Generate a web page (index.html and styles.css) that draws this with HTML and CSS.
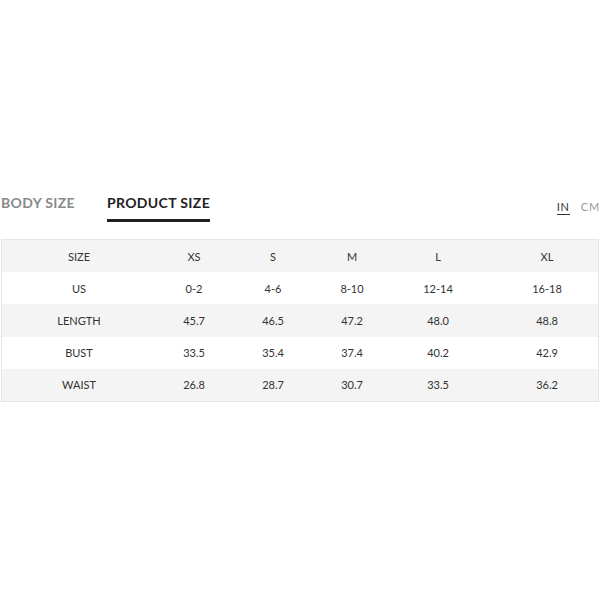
FILE: index.html
```html
<!DOCTYPE html>
<html>
<head>
<meta charset="utf-8">
<link rel="stylesheet" href="styles.css">
</head>
<body>
<div class="wrap">
  <div class="top">
    <div class="tabs">
      <div class="tab">BODY SIZE</div>
      <div class="tab active">PRODUCT SIZE</div>
    </div>
    <div class="units">
      <span class="unit on">IN</span>
      <span class="unit">CM</span>
    </div>
  </div>
  <div class="table">
    <div class="row grey"><div>SIZE</div><div>XS</div><div>S</div><div>M</div><div>L</div><div>XL</div></div>
    <div class="row"><div>US</div><div>0-2</div><div>4-6</div><div>8-10</div><div>12-14</div><div>16-18</div></div>
    <div class="row grey"><div>LENGTH</div><div>45.7</div><div>46.5</div><div>47.2</div><div>48.0</div><div>48.8</div></div>
    <div class="row"><div>BUST</div><div>33.5</div><div>35.4</div><div>37.4</div><div>40.2</div><div>42.9</div></div>
    <div class="row grey"><div>WAIST</div><div>26.8</div><div>28.7</div><div>30.7</div><div>33.5</div><div>36.2</div></div>
  </div>
</div>
</body>
</html>
```
FILE: styles.css
```css
html, body {
  margin: 0;
  padding: 0;
  background: #fff;
}
body {
  font-family: Lato, "Open Sans", sans-serif;
  color: #333;
}
.wrap {
  padding-top: 194px;
}
.top {
  display: flex;
  justify-content: space-between;
  align-items: flex-start;
  padding-left: 1px;
  padding-right: 0;
  margin-bottom: 17px;
}
.tabs {
  display: flex;
  gap: 32px;
}
.tab {
  font-size: 14px;
  font-weight: 700;
  line-height: 17px;
  color: #8a8a8a;
  padding-bottom: 8px;
  border-bottom: 3px solid transparent;
  letter-spacing: 0.35px;
}
.tab.active {
  color: #222;
  border-bottom-color: #222;
}
.units {
  display: flex;
  gap: 11px;
  margin-top: 6px;
}
.unit {
  font-size: 11px;
  line-height: 13px;
  letter-spacing: 0.8px;
  color: #999;
  padding-bottom: 1px;
  border-bottom: 1px solid transparent;
}
.unit.on {
  color: #333;
  border-bottom-color: #333;
}
.table {
  margin-left: 1px;
  width: 596px;
  border: 1px solid #e6e6e6;
}
.row {
  display: grid;
  grid-template-columns: 154px 76px 82px 76px 96px 112px;
  height: 32.2px;
  align-items: center;
  font-size: 11px;
  color: #333;
}
.row > div {
  text-align: center;
}
.row > div:last-child {
  padding-left: 10px;
}
.row.grey {
  background: #f4f4f4;
}
```
